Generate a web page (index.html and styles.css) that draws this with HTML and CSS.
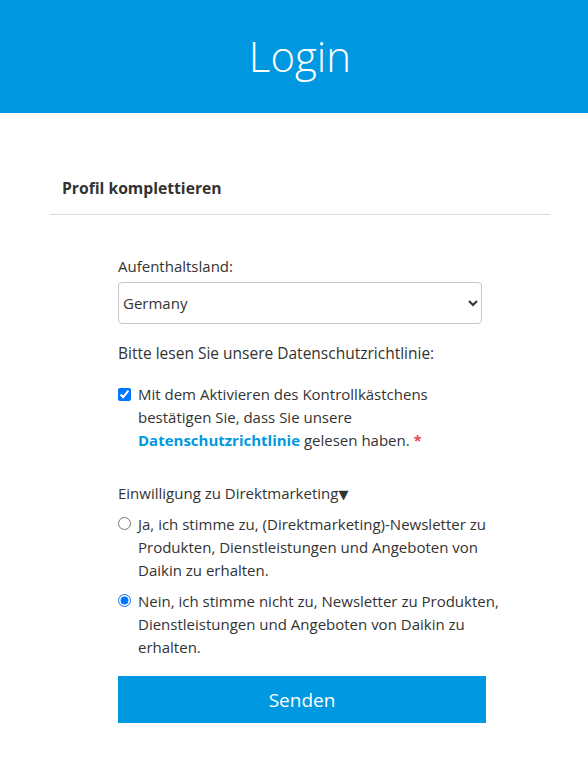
FILE: index.html
```html
<!DOCTYPE html>
<html lang="de">
<head>
<meta charset="utf-8">
<title>Login</title>
<link rel="stylesheet" href="styles.css">
</head>
<body>
<header class="topbar">
  <h1 class="topbar-title">Login</h1>
</header>
<main class="panel">
  <h2 class="panel-heading">Profil komplettieren</h2>
  <form class="form">
    <label class="field-label" for="country">Aufenthaltsland:</label>
    <select id="country" class="select">
      <option>Germany</option>
    </select>
    <p class="note">Bitte lesen Sie unsere Datenschutzrichtlinie:</p>
    <label class="check">
      <input type="checkbox" class="check-input" checked>
      <span class="check-text">Mit dem Aktivieren des Kontrollkästchens bestätigen Sie, dass Sie unsere <a class="link" href="#">Datenschutzrichtlinie</a> gelesen haben. <span class="required">*</span></span>
    </label>
    <p class="group-title">Einwilligung zu Direktmarketing<span class="caret">▼</span></p>
    <label class="check radio-first">
      <input type="radio" name="dm" class="check-input">
      <span class="check-text">Ja, ich stimme zu, (Direktmarketing)-Newsletter zu Produkten, Dienstleistungen und Angeboten von Daikin zu erhalten.</span>
    </label>
    <label class="check radio-second">
      <input type="radio" name="dm" class="check-input" checked>
      <span class="check-text">Nein, ich stimme nicht zu, Newsletter zu Produkten, Dienstleistungen und Angeboten von Daikin zu erhalten.</span>
    </label>
    <button type="button" class="submit">Senden</button>
  </form>
</main>
</body>
</html>
```

FILE: styles.css
```css
* { box-sizing: border-box; }
html, body { margin: 0; padding: 0; background: #fff; }
body {
  font-family: "Open Sans", "Liberation Sans", sans-serif;
  color: #333;
  font-size: 15px;
  line-height: 23px;
}
.topbar {
  background: #0098e0;
  height: 113px;
  display: flex;
  align-items: center;
  justify-content: center;
  padding-left: 12px;
}
.topbar-title {
  margin: 0;
  color: #fff;
  font-weight: 300;
  font-size: 42px;
  line-height: 50px;
  padding-bottom: 1px;
}
.panel {
  margin: 55px 38px 0 50px;
}
.panel-heading {
  margin: 0;
  font-size: 15.7px;
  font-weight: 700;
  line-height: 21px;
  padding: 10px 12px 15px;
  border-bottom: 1px solid #dcdcdc;
  color: #333;
}
.form {
  display: flex;
  flex-direction: column;
  align-items: flex-start;
  padding: 40px 0 0 68px;
  width: 451px;
}
.field-label { display: block; }
.select {
  margin-top: 4px;
  width: 364px;
  height: 42px;
  border: 1px solid #c8c8c8;
  border-radius: 4px;
  font-family: inherit;
  font-size: 15px;
  color: #333;
  padding: 0 8px 0 0;
  background: #fff;
}
.note { margin: 18px 0 0; font-size: 15.5px; }
.check {
  display: flex;
  gap: 7px;
  margin-top: 18px;
  align-items: flex-start;
}
.check-input {
  margin: 5px 0 0;
  width: 13px;
  height: 13px;
  flex: none;
}
.check-text { flex: 1; }
.link {
  color: #0098e0;
  font-weight: 700;
  text-decoration: none;
}
.required { color: #e04b4b; font-weight: 700; }
.group-title { margin: 30px 0 0; }
.caret { font-family: "DejaVu Sans", sans-serif; font-size: 13px; color: #333; }
.radio-first { margin-top: 7px; }
.radio-first .check-input, .radio-second .check-input { margin-top: 4px; }
.radio-second { margin-top: 8px; }
.submit {
  margin-top: 17px;
  width: 368px;
  height: 47px;
  border: 0;
  background: #0098e0;
  color: #fff;
  font-family: inherit;
  font-size: 19px;
  padding: 0;
}
```
